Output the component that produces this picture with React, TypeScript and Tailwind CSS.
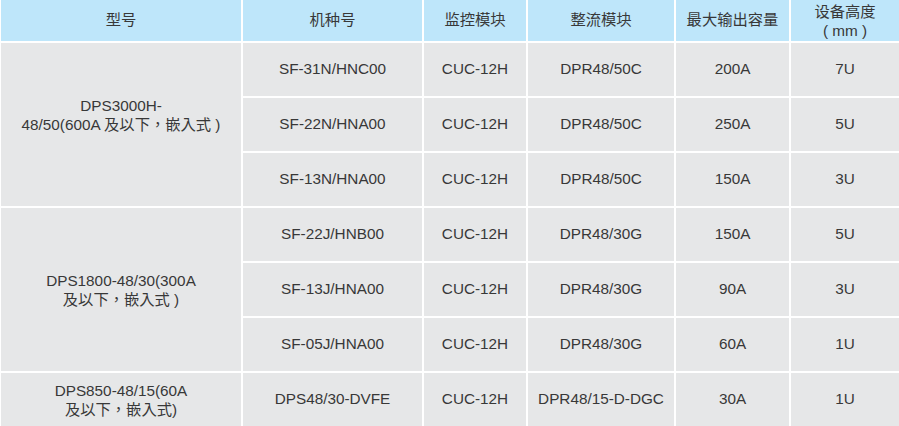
const headers = ['机种号', '监控模块', '整流模块', '最大输出容量'];

type Row = [string, string, string, string, string];

const groups: { model: React.ReactNode; pad?: string; rows: Row[] }[] = [
  {
    model: (
      <>
        DPS3000H-
        <br />
        48/50(600A 及以下，嵌入式 )
      </>
    ),
    pad: 'pb-[20px]',
    rows: [
      ['SF-31N/HNC00', 'CUC-12H', 'DPR48/50C', '200A', '7U'],
      ['SF-22N/HNA00', 'CUC-12H', 'DPR48/50C', '250A', '5U'],
      ['SF-13N/HNA00', 'CUC-12H', 'DPR48/50C', '150A', '3U'],
    ],
  },
  {
    model: (
      <>
        DPS1800-48/30(300A
        <br />
        及以下，嵌入式 )
      </>
    ),
    rows: [
      ['SF-22J/HNB00', 'CUC-12H', 'DPR48/30G', '150A', '5U'],
      ['SF-13J/HNA00', 'CUC-12H', 'DPR48/30G', '90A', '3U'],
      ['SF-05J/HNA00', 'CUC-12H', 'DPR48/30G', '60A', '1U'],
    ],
  },
  {
    model: (
      <>
        DPS850-48/15(60A
        <br />
        及以下，嵌入式)
      </>
    ),
    rows: [['DPS48/30-DVFE', 'CUC-12H', 'DPR48/15-D-DGC', '30A', '1U']],
  },
];

const rowSpan: Record<number, string> = {
  1: 'row-span-1',
  3: 'row-span-3',
};

export default function App() {
  return (
    <div
      className="w-[899px] h-[426px] bg-white pl-[1px] text-[15.3px] text-[#383838] overflow-hidden"
      style={{ fontFamily: '"Liberation Sans", "Noto Sans CJK TC", sans-serif' }}
    >
      <div className="grid grid-cols-[240px_179px_102px_146px_113px_108px] grid-rows-[41px_repeat(7,53px)] gap-[2px]">
        {/* Header */}
        <div className="flex items-center justify-center bg-[#bee6fa]">型号</div>
        {headers.map((h) => (
          <div key={h} className="flex items-center justify-center bg-[#bee6fa]">
            {h}
          </div>
        ))}
        <div className="flex flex-col items-center justify-center bg-[#bee6fa] leading-[19px] pt-[1px]">
          <span>设备高度</span>
          <span>( mm )</span>
        </div>

        {/* Body */}
        {groups.map((g, gi) =>
          g.rows.map((r, ri) => (
            <div key={`${gi}-${ri}`} className="contents">
              {ri === 0 && (
                <div
                  className={`${rowSpan[g.rows.length]} flex items-center justify-center bg-[#e6e7e8] text-center leading-[19px] ${g.pad ?? ''}`}
                >
                  <div>{g.model}</div>
                </div>
              )}
              {r.map((c, ci) => (
                <div key={ci} className="flex items-center justify-center bg-[#e6e7e8]">
                  {c}
                </div>
              ))}
            </div>
          ))
        )}
      </div>
    </div>
  );
}
